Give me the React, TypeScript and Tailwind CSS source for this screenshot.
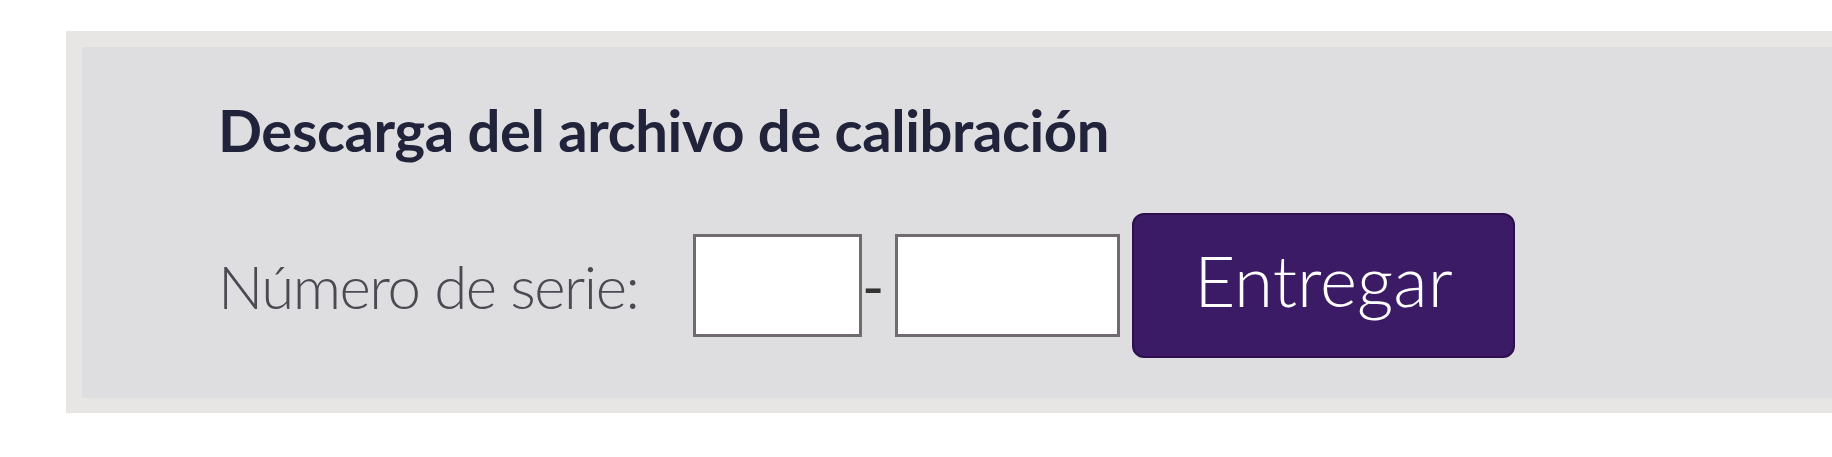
export default function App() {
  return (
    <div className="h-[457px] w-full overflow-hidden bg-white pt-[31px] pl-[66px] font-['Lato','Noto_Sans',sans-serif]">
      {/* Panel */}
      <div className="h-[382px] bg-[#e7e6e4] pt-[16px] pl-[16px] pb-[15px]">
        <div className="h-full bg-[#dedde0] pl-[136px] pt-[54px]">
          <h2 className="text-[58px] leading-[58px] font-bold tracking-[-0.4px] text-[#20233a]">
            Descarga del archivo de calibración
          </h2>

          {/* Serial form */}
          <div className="mt-[54px] flex items-center">
            <label className="w-[475px] text-[60px] leading-[60px] font-light tracking-[-1.5px] text-[#4a4a52]">
              Número de serie:
            </label>
            <input
              type="text"
              className="h-[103px] w-[169px] border-[3px] border-[#6f6b71] bg-white"
            />
            <span className="w-[33px] text-[60px] leading-[60px] text-[#333]">-</span>
            <input
              type="text"
              className="h-[103px] w-[225px] border-[3px] border-[#6f6b71] bg-white"
            />
            <button className="ml-[12px] flex h-[145px] w-[383px] items-center justify-center rounded-[12px] border-2 border-[#2d0f4f] bg-[#3b1b65] pb-3 text-[71px] leading-[71px] font-light text-white">
              Entregar
            </button>
          </div>
        </div>
      </div>
    </div>
  );
}
